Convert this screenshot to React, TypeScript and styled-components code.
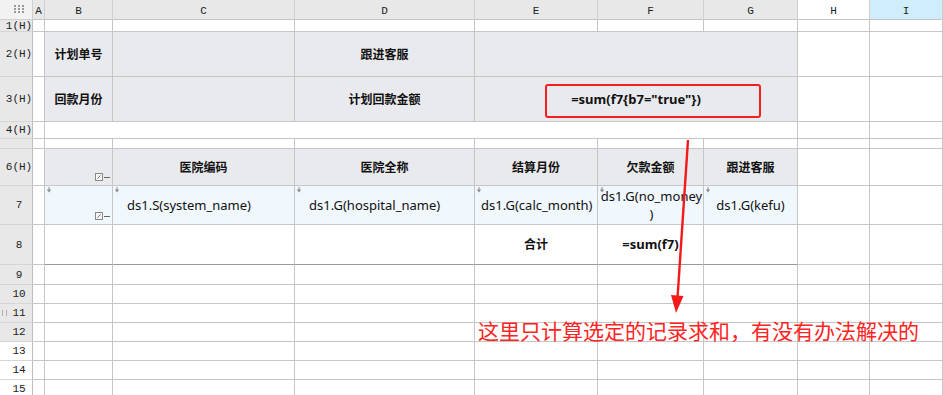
import React from "react";
import styled, { createGlobalStyle, css } from "styled-components";

const GlobalStyle = createGlobalStyle`
  html, body { margin: 0; padding: 0; background: #ffffff; overflow: hidden; }
  #root { width: 943px; height: 395px; overflow: hidden; }
`;

const COLS = [33, 12, 68, 182, 180, 123, 106, 94, 72, 73];
const ROWS = [20, 12, 45, 45, 17, 10, 37, 39, 40, 20, 19, 19, 19, 19, 19, 19];

const Sheet = styled.div`
  position: relative;
  display: grid;
  grid-template-columns: ${COLS.map((c) => c + "px").join(" ")};
  grid-template-rows: ${ROWS.map((r) => r + "px").join(" ")};
  width: 943px;
  height: 395px;
  overflow: hidden;
  background: #ffffff;
`;

const headFont = css`
  font-family: "Liberation Mono", "DejaVu Sans Mono", monospace;
  font-size: 11px;
  color: #222;
`;

const Corner = styled.div`
  background: #f2f2f2;
  border-right: 1px solid #cfcfcf;
  border-bottom: 1px solid #cfcfcf;
  box-sizing: border-box;
  display: flex;
  align-items: center;
  justify-content: center;
  padding-left: 6px;
`;

const ColHead = styled.div<{ $bg?: string }>`
  ${headFont}
  background: ${(p) => p.$bg || "#e8e8e8"};
  border-right: 1px solid #cfcfcf;
  border-bottom: 1px solid #c4c4c4;
  box-sizing: border-box;
  display: flex;
  align-items: center;
  justify-content: center;
  padding-top: 2px;
`;

const RowHead = styled.div<{ $white?: boolean }>`
  ${headFont}
  position: relative;
  background: ${(p) => (p.$white ? "#ffffff" : "#e8e8e8")};
  border-right: 1px solid #bdbdbd;
  border-bottom: 1px solid #d6d6d6;
  box-sizing: border-box;
  display: flex;
  align-items: center;
  justify-content: center;
  padding-left: 6px;
  white-space: nowrap;
`;

const Cell = styled.div<{
  $bg?: string;
  $bold?: boolean;
  $align?: "left" | "center";
  $span?: number;
  $darkBottom?: boolean;
  $pad?: number;
}>`
  position: relative;
  grid-column: span ${(p) => p.$span || 1};
  background: ${(p) => p.$bg || "#ffffff"};
  border-right: 1px solid #c6c6c6;
  border-bottom: 1px solid ${(p) => (p.$darkBottom ? "#9a9a9a" : "#c6c6c6")};
  box-sizing: border-box;
  display: flex;
  align-items: center;
  justify-content: ${(p) => (p.$align === "left" ? "flex-start" : "center")};
  padding-left: ${(p) => p.$pad ?? 0}px;
  font-family: "Noto Sans", "Noto Sans CJK SC", sans-serif;
  font-size: ${(p) => (p.$bold ? 12 : 13)}px;
  font-weight: ${(p) => (p.$bold ? 700 : 400)};
  color: #111;
  white-space: nowrap;
  overflow: visible;
  text-align: center;
  line-height: 17px;
`;

const FormulaText = styled.span`
  font-size: 13px;
  font-weight: 700;
`;

const Wrapped = styled.span`
  display: block;
  text-align: center;
  margin-left: 2px;
  line-height: 18px;
`;

const IconSlot = styled.span`
  position: absolute;
  right: 1px;
  bottom: 4px;
  display: flex;
  align-items: center;
  line-height: 0;
`;

const MarkerSlot = styled.span`
  position: absolute;
  left: 1px;
  top: 1px;
  line-height: 0;
`;

const Dots = () => (
  <svg width="11" height="9" viewBox="0 0 11 9">
    {[0, 4, 8].map((x) =>
      [0, 3, 6].map((y) => (
        <rect key={`${x}-${y}`} x={x} y={y} width="2" height="2" fill="#9a9a9a" />
      ))
    )}
  </svg>
);

const CheckIcon = () => (
  <svg width="16" height="8" viewBox="0 0 16 8">
    <rect x="0.5" y="0.5" width="7" height="7" fill="#f4f4f4" stroke="#8a8a8a" />
    <path d="M2.5 5.5 L5.5 2.5" stroke="#777" strokeWidth="1" />
    <path d="M9 4.5 H15" stroke="#666" strokeWidth="1" />
  </svg>
);

const DropMarker = () => (
  <svg width="6" height="6" viewBox="0 0 6 6">
    <path d="M3 0 V4" stroke="#8c8c8c" strokeWidth="1" />
    <path d="M0.8 2.6 L3 5.4 L5.2 2.6 Z" fill="#8c8c8c" />
  </svg>
);

const Grip = styled.span`
  position: absolute;
  left: 2px;
  top: 50%;
  margin-top: -3px;
  width: 3px;
  height: 6px;
  border-left: 1px solid #b0b0b0;
  border-right: 1px solid #b0b0b0;
`;

const Overlay = styled.svg`
  position: absolute;
  left: 0;
  top: 0;
  pointer-events: none;
`;

const RedBox = styled.div`
  position: absolute;
  left: 545px;
  top: 84px;
  width: 216px;
  height: 34px;
  box-sizing: border-box;
  border: 2px solid #f41f1f;
  border-radius: 3px;
  pointer-events: none;
`;

const Note = styled.div`
  position: absolute;
  left: 478px;
  top: 317px;
  font-family: "Noto Sans CJK SC", "Noto Sans", sans-serif;
  font-size: 21px;
  line-height: 26px;
  color: #ff2424;
  white-space: nowrap;
  pointer-events: none;
`;

const blue = "#f0f7fd";
const gray = "#e9eaed";

const Empty = ({ n, bg }: { n: number; bg?: string }) => (
  <>
    {Array.from({ length: n }).map((_, i) => (
      <Cell key={i} $bg={bg} />
    ))}
  </>
);

const Marked = ({
  children,
  ...rest
}: React.ComponentProps<typeof Cell> & { children?: React.ReactNode }) => (
  <Cell $bg={blue} {...rest}>
    <MarkerSlot>
      <DropMarker />
    </MarkerSlot>
    {children}
  </Cell>
);

export default function App() {
  const colLetters = ["A", "B", "C", "D", "E", "F", "G", "H", "I"];
  return (
    <>
      <GlobalStyle />
      <Sheet>
        {/* column header */}
        <Corner>
          <Dots />
        </Corner>
        {colLetters.map((l) => (
          <ColHead key={l} $bg={l === "H" ? "#ffffff" : l === "I" ? "#cfedfa" : undefined}>
            {l}
          </ColHead>
        ))}

        {/* row 1 */}
        <RowHead>1(H)</RowHead>
        <Empty n={9} />

        {/* row 2 */}
        <RowHead>2(H)</RowHead>
        <Cell />
        <Cell $bg={gray} $bold>计划单号</Cell>
        <Cell $bg={gray} />
        <Cell $bg={gray} $bold>跟进客服</Cell>
        <Cell $bg={gray} $span={3} />
        <Empty n={2} />

        {/* row 3 */}
        <RowHead>3(H)</RowHead>
        <Cell />
        <Cell $bg={gray} $bold>回款月份</Cell>
        <Cell $bg={gray} />
        <Cell $bg={gray} $bold>计划回款金额</Cell>
        <Cell $bg={gray} $span={3} $bold>
          <FormulaText>=sum(f7{"{"}b7="true"{"}"})</FormulaText>
        </Cell>
        <Empty n={2} />

        {/* row 4 */}
        <RowHead>4(H)</RowHead>
        <Cell />
        <Cell $span={6} />
        <Empty n={2} />

        {/* row 5 (collapsed) */}
        <RowHead />
        <Empty n={9} />

        {/* row 6 */}
        <RowHead>6(H)</RowHead>
        <Cell />
        <Cell $bg={gray}>
          <IconSlot>
            <CheckIcon />
          </IconSlot>
        </Cell>
        <Cell $bg={gray} $bold>医院编码</Cell>
        <Cell $bg={gray} $bold>医院全称</Cell>
        <Cell $bg={gray} $bold>结算月份</Cell>
        <Cell $bg={gray} $bold>欠款金额</Cell>
        <Cell $bg={gray} $bold>跟进客服</Cell>
        <Empty n={2} />

        {/* row 7 */}
        <RowHead>7</RowHead>
        <Cell />
        <Marked>
          <IconSlot>
            <CheckIcon />
          </IconSlot>
        </Marked>
        <Marked $align="left" $pad={14}>ds1.S(system_name)</Marked>
        <Marked $align="left" $pad={14}>ds1.G(hospital_name)</Marked>
        <Marked $align="left" $pad={6}>ds1.G(calc_month)</Marked>
        <Marked>
          <Wrapped>
            ds1.G(no_money
            <br />)
          </Wrapped>
        </Marked>
        <Marked>ds1.G(kefu)</Marked>
        <Empty n={2} />

        {/* row 8 */}
        <RowHead>8</RowHead>
        <Cell />
        <Cell $darkBottom />
        <Cell $darkBottom />
        <Cell $darkBottom />
        <Cell $darkBottom $bold>合计</Cell>
        <Cell $darkBottom $bold>
          <FormulaText>=sum(f7)</FormulaText>
        </Cell>
        <Cell $darkBottom />
        <Empty n={2} />

        {/* rows 9 - 15 */}
        {[9, 10, 11, 12, 13, 14, 15].map((r) => (
          <React.Fragment key={r}>
            <RowHead $white={r >= 13}>
              {r === 11 && <Grip />}
              {r}
            </RowHead>
            <Empty n={9} />
          </React.Fragment>
        ))}

        <RedBox />
        <Overlay width="943" height="395" viewBox="0 0 943 395">
          <path d="M688 140 L677.5 298" stroke="#f41a1a" strokeWidth="2.4" fill="none" />
          <path d="M671 295 L683.5 296 L676 313 Z" fill="#f41a1a" />
        </Overlay>
        <Note>这里只计算选定的记录求和，有没有办法解决的</Note>
      </Sheet>
    </>
  );
}
